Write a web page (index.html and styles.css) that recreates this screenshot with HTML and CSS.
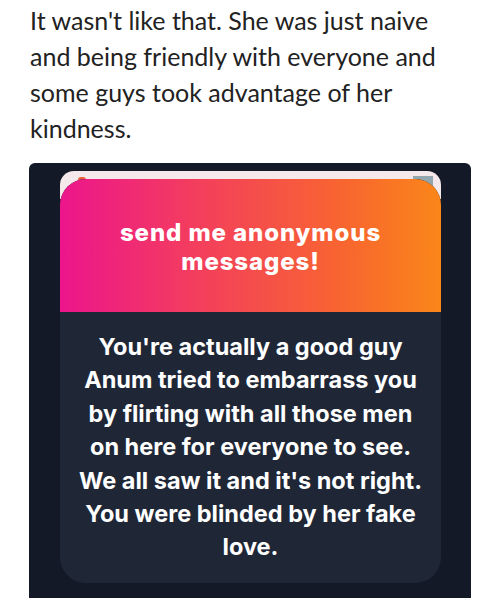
FILE: index.html
```html
<!DOCTYPE html>
<html lang="en">
<head>
    <meta charset="UTF-8">
    <meta name="viewport" content="width=device-width, initial-scale=1.0">
    <title>Reply</title>
    <link rel="stylesheet" href="styles.css">
</head>
<body>
<p class="reply-text">It wasn't like that. She was just naive<br>and being friendly with everyone and<br>some guys took advantage of her<br>kindness.</p>

<div class="shot">
    <div class="stack">
        <div class="pill-behind">
            <span class="pill-dot"></span>
            <span class="pill-square"></span>
        </div>
        <div class="card">
            <div class="card-head">
                <h2>send me anonymous<br>messages!</h2>
            </div>
            <div class="card-body">
                <p>You're actually a good guy<br>Anum tried to embarrass you<br>by flirting with all those men<br>on here for everyone to see.<br>We all saw it and it's not right.<br>You were blinded by her fake<br>love.</p>
            </div>
        </div>
    </div>
</div>
</body>
</html>
```

FILE: styles.css
```css
body, html {
    margin: 0;
    padding: 0;
    background-color: #fff;
    font-family: "Lato", "Open Sans", sans-serif;
}

body {
    width: 500px;
    height: 598px;
    overflow: hidden;
}

.reply-text {
    margin: 0;
    padding: 2px 0 0 30px;
    font-size: 25px;
    line-height: 36px;
    color: #222;
    white-space: nowrap;
}

.shot {
    margin: 17px 0 0 29px;
    width: 442px;
    height: 440px;
    background-color: #131926;
    border-radius: 6px 6px 0 0;
    padding-top: 8px;
    box-sizing: border-box;
}

.stack {
    position: relative;
    margin-left: 31px;
    width: 381px;
}

.pill-behind {
    position: absolute;
    top: 0;
    left: 0;
    right: 0;
    height: 28px;
    background-color: #f4e8ea;
    border-radius: 14px 14px 0 0;
}

.pill-dot {
    position: absolute;
    left: 18px;
    top: 6px;
    width: 8px;
    height: 6px;
    border-radius: 4px;
    background-color: #e8603a;
}

.pill-square {
    position: absolute;
    right: 8px;
    top: 5px;
    width: 20px;
    height: 14px;
    background-color: #93a6ae;
}

.card {
    position: relative;
    top: 8px;
    border-radius: 26px;
    overflow: hidden;
    background-color: #1f2737;
}

.card-head {
    height: 133px;
    box-sizing: border-box;
    padding-top: 39px;
    background: linear-gradient(90deg, #ec158c 0%, #f33d5e 35%, #f8662f 75%, #fb8619 100%);
}

.card-head h2 {
    margin: 0;
    text-align: center;
    color: #fff;
    font-family: "Inter", "Roboto", sans-serif;
    font-weight: 800;
    font-size: 24px;
    line-height: 29px;
    letter-spacing: 0.9px;
    white-space: nowrap;
}

.card-body {
    height: 271px;
    box-sizing: border-box;
    padding-top: 18px;
}

.card-body p {
    margin: 0;
    text-align: center;
    color: #fff;
    font-family: "Inter", "Roboto", sans-serif;
    font-weight: 700;
    font-size: 23.5px;
    line-height: 33.4px;
    white-space: nowrap;
}
```
